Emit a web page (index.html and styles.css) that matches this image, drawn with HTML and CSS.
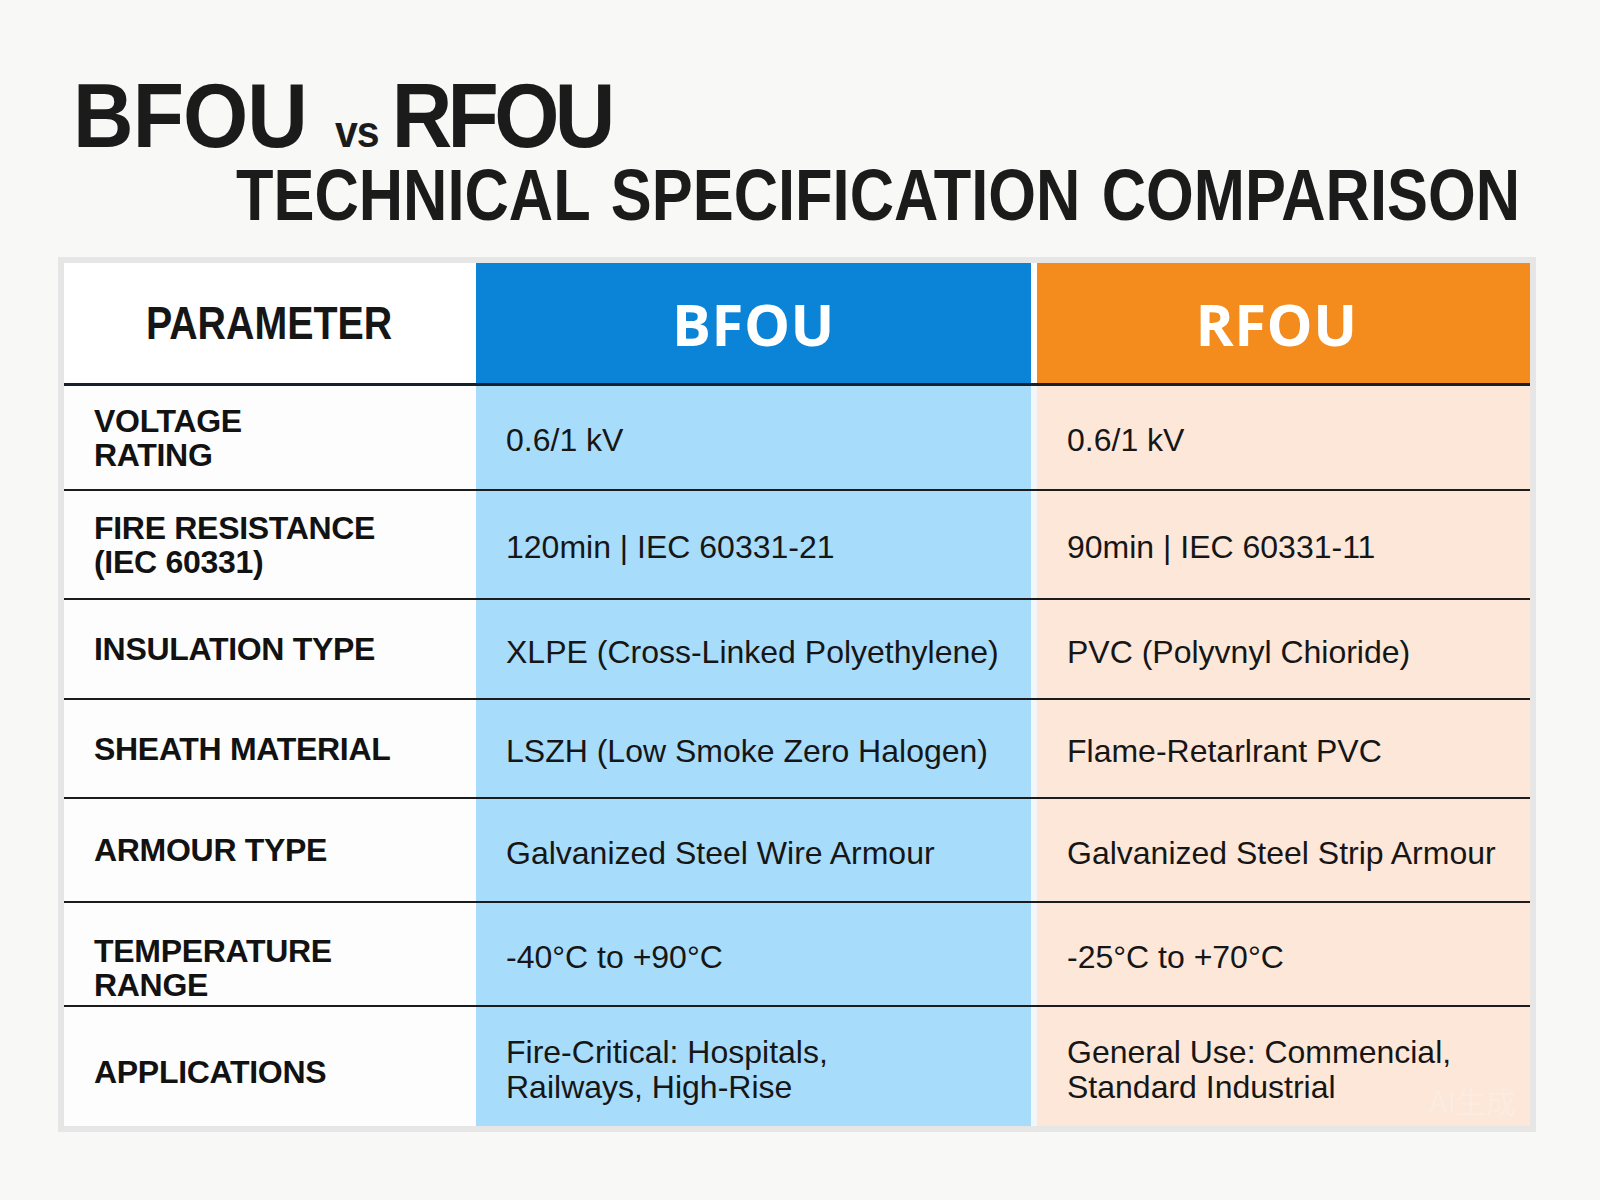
FILE: index.html
```html
<!DOCTYPE html>
<html lang="en">
<head>
<meta charset="utf-8">
<title>BFOU vs RFOU Technical Specification Comparison</title>
<link rel="stylesheet" href="styles.css">
</head>
<body>
<main class="page">
  <header class="heading">
    <h1 class="title-main"><span class="squeeze-main">BFOU<span class="vs">vs</span><span class="r-word">RFOU</span></span></h1>
    <h2 class="title-sub"><span class="squeeze-sub">TECHNICAL SPECIFICATION COMPARISON</span></h2>
  </header>

  <section class="frame">
    <div class="table">
      <div class="row head">
        <div class="cell param-head"><span class="squeeze-param">PARAMETER</span></div>
        <div class="cell head-b">BFOU</div>
        <div class="cell col-r head-r">RFOU</div>
      </div>
      <div class="row">
        <div class="cell label">VOLTAGE<br>RATING</div>
        <div class="cell value val-b">0.6/1 kV</div>
        <div class="cell col-r value val-r">0.6/1 kV</div>
      </div>
      <div class="row">
        <div class="cell label">FIRE RESISTANCE<br>(IEC 60331)</div>
        <div class="cell value val-b">120min | IEC 60331-21</div>
        <div class="cell col-r value val-r">90min | IEC 60331-11</div>
      </div>
      <div class="row">
        <div class="cell label">INSULATION TYPE</div>
        <div class="cell value val-b">XLPE (Cross-Linked Polyethylene)</div>
        <div class="cell col-r value val-r">PVC (Polyvnyl Chioride)</div>
      </div>
      <div class="row">
        <div class="cell label">SHEATH MATERIAL</div>
        <div class="cell value val-b">LSZH (Low Smoke Zero Halogen)</div>
        <div class="cell col-r value val-r">Flame-Retarlrant PVC</div>
      </div>
      <div class="row">
        <div class="cell label">ARMOUR TYPE</div>
        <div class="cell value val-b">Galvanized Steel Wire Armour</div>
        <div class="cell col-r value val-r">Galvanized Steel Strip Armour</div>
      </div>
      <div class="row">
        <div class="cell label label-low">TEMPERATURE<br>RANGE</div>
        <div class="cell value val-b">-40°C to +90°C</div>
        <div class="cell col-r value val-r">-25°C to +70°C</div>
      </div>
      <div class="row last">
        <div class="cell label label-apps">APPLICATIONS</div>
        <div class="cell value val-b">Fire-Critical: Hospitals,<br>Railways, High-Rise</div>
        <div class="cell col-r value val-r">General Use: Commencial,<br>Standard Industrial</div>
      </div>
    </div>
    <span class="watermark">AI生成</span>
  </section>
</main>
</body>
</html>
```

FILE: styles.css
```css
* { box-sizing: border-box; }

html, body {
  margin: 0;
  padding: 0;
  background: #f8f8f7;
}

body {
  width: 1600px;
  height: 1200px;
  overflow: hidden;
  font-family: "Liberation Sans", Arial, sans-serif;
  color: #151515;
}

.page {
  padding-top: 71px;
}

.heading {
  margin: 0 0 26px 0;
}

.title-main {
  margin: 0;
  padding-left: 73px;
  font-family: "Liberation Sans", Arial, sans-serif;
  font-weight: 700;
  font-size: 90px;
  line-height: 90px;
  height: 90px;
  color: #1b1b1b;
  white-space: nowrap;
}

.squeeze-main {
  display: inline-block;
  transform: scaleX(0.932);
  transform-origin: left center;
  letter-spacing: -1px;
}

.vs {
  font-size: 44px;
  line-height: 0;
  letter-spacing: -1px;
  margin: 0 14px 0 30px;
}

.r-word {
  letter-spacing: -5px;
}

.title-sub {
  margin: -3px 0 0 0;
  padding-left: 236px;
  font-family: "Liberation Sans", Arial, sans-serif;
  font-weight: 700;
  font-size: 73px;
  line-height: 73px;
  height: 73px;
  color: #1b1b1b;
  white-space: nowrap;
}

.squeeze-sub {
  display: inline-block;
  transform: scaleX(0.841);
  transform-origin: left center;
  word-spacing: 5px;
  margin-right: -250px;
}

.frame {
  position: relative;
  margin-left: 58px;
  width: 1478px;
  border: 6px solid #e6e6e6;
  background: #ffffff;
}

.table {
  display: flex;
  flex-direction: column;
}

.row {
  display: grid;
  grid-template-columns: 412px 555px 499px;
  border-bottom: 2px solid #1c1c1c;
  background: #f3f6f8;
}

.row.head {
  height: 123px;
  border-bottom: 3px solid #17212b;
  background: #ffffff;
}

.row:nth-child(2) { height: 105px; }
.row:nth-child(3) { height: 109px; }
.row:nth-child(4) { height: 100px; }
.row:nth-child(5) { height: 99px; }
.row:nth-child(6) { height: 104px; }
.row:nth-child(7) { height: 104px; }
.row.last { height: 119px; border-bottom: none; }

.cell {
  display: flex;
  align-items: center;
}

.col-r {
  margin-left: 6px;
}

.param-head {
  justify-content: center;
  background: #ffffff;
  font-weight: 700;
  font-size: 46px;
  color: #161616;
}

.squeeze-param {
  display: inline-block;
  transform: scaleX(0.855);
  margin-right: 2px;
}

.head-b, .head-r {
  justify-content: center;
  font-family: "Open Sans", "Liberation Sans", sans-serif;
  font-weight: 700;
  font-size: 58px;
  color: #ffffff;
  letter-spacing: 0.5px;
}

.head-b { background: #0b84d7; }
.head-r { background: #f38c1d; padding-right: 14px; }

.label {
  background: #fdfdfd;
  padding-left: 30px;
  font-weight: 700;
  font-size: 32px;
  line-height: 34px;
  letter-spacing: -0.3px;
  color: #121212;
}

.label-low { padding-top: 28px; }
.label-apps { padding-top: 10px; }

.value {
  padding-left: 30px;
  padding-top: 6px;
  font-size: 32px;
  line-height: 35px;
  color: #161616;
}

.val-b { background: #a8dcfb; }
.val-r { background: #fce7d9; }

.watermark {
  position: absolute;
  right: 14px;
  bottom: 4px;
  font-family: "Noto Sans CJK SC", sans-serif;
  font-size: 30px;
  color: rgba(255, 255, 255, 0.2);
}
```
